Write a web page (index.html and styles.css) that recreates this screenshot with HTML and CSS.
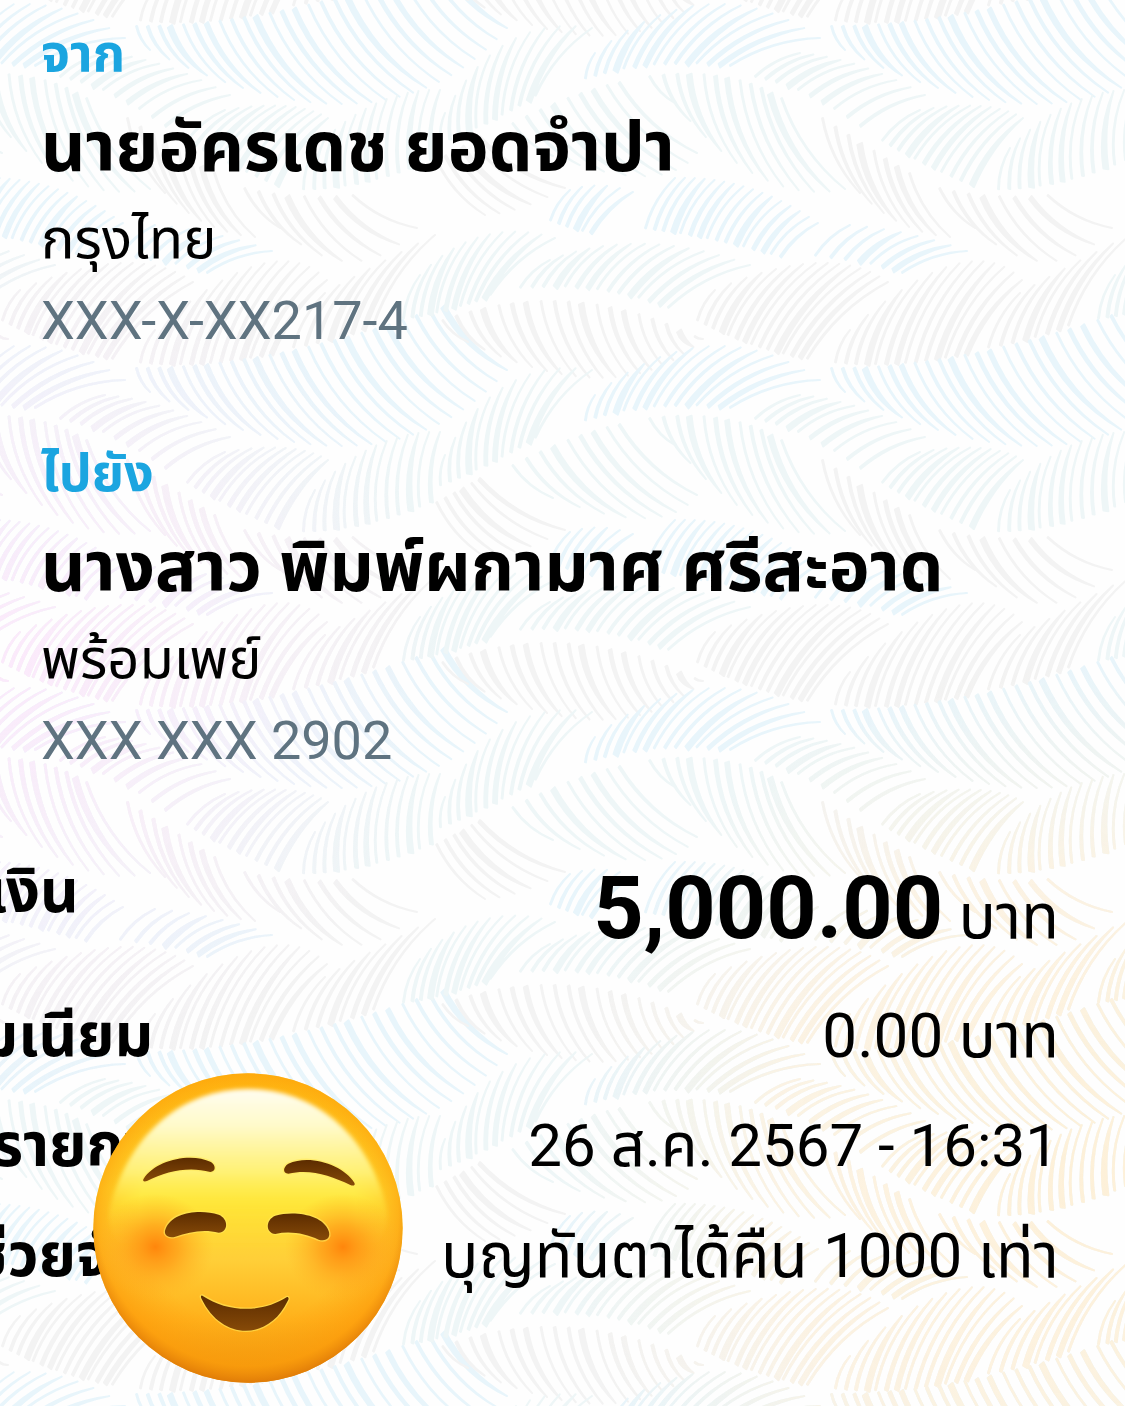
FILE: index.html
```
<!DOCTYPE html>
<html lang="th">
  <head>
    <meta charset="UTF-8" />
    <meta name="viewport" content="width=device-width, initial-scale=1.0" />
    <title>รายละเอียดการโอนเงิน</title>
    <link rel="stylesheet" href="styles.css">
  </head>
  <body>
    <main class="slip">
      <svg class="slip-bg" aria-hidden="true">
        <defs>
          <g id="leaves"></g>
          <pattern id="leafPattern" x="430" y="190" width="695" height="342" patternUnits="userSpaceOnUse">
            <g id="tile"></g>
          </pattern>
          <mask id="leafMask" class="leaf-mask">
            <rect width="100%" height="100%" fill="url(#leafPattern)" />
          </mask>
          <radialGradient id="pinkTint" gradientUnits="userSpaceOnUse" cx="0" cy="660" r="440">
            <stop offset="0" stop-color="#fbe9fb" />
            <stop offset="0.5" stop-color="#f8eef9" stop-opacity="0.8" />
            <stop offset="1" stop-color="#f6f0f8" stop-opacity="0" />
          </radialGradient>
          <radialGradient id="orangeTint" gradientUnits="userSpaceOnUse" cx="1080" cy="1180" r="520">
            <stop offset="0" stop-color="#fdf0d8" />
            <stop offset="0.6" stop-color="#fcf2e1" stop-opacity="0.9" />
            <stop offset="1" stop-color="#f8f4ea" stop-opacity="0" />
          </radialGradient>
        </defs>
        <rect width="100%" height="100%" fill="url(#leafPattern)" />
        <g mask="url(#leafMask)">
          <rect width="100%" height="100%" fill="url(#pinkTint)" />
          <rect width="100%" height="100%" fill="url(#orangeTint)" />
        </g>
      </svg>

      <section class="party">
        <h2>จาก</h2>
        <p class="name">นายอัครเดช ยอดจำปา</p>
        <p class="bank">กรุงไทย</p>
        <p class="account">XXX-X-XX217-4</p>
      </section>

      <section class="party">
        <h2>ไปยัง</h2>
        <p class="name">นางสาว พิมพ์ผกามาศ ศรีสะอาด</p>
        <p class="bank">พร้อมเพย์</p>
        <p class="account">XXX XXX 2902</p>
      </section>

      <dl class="details">
        <div class="row row-amount">
          <dt>จำนวนเงิน</dt>
          <dd><strong>5,000.00</strong> บาท</dd>
        </div>
        <div class="row">
          <dt>ค่าธรรมเนียม</dt>
          <dd>0.00 บาท</dd>
        </div>
        <div class="row row-date">
          <dt>วันที่ทำรายการ</dt>
          <dd>26 ส.ค. 2567 - 16:31</dd>
        </div>
        <div class="row">
          <dt>บันทึกช่วยจำ</dt>
          <dd>บุญทันตาได้คืน 1000 เท่า</dd>
        </div>
      </dl>

      <svg class="emoji" viewBox="38 38 930 930" role="img" aria-label="☺️">
        <defs>
          <linearGradient id="face" x1="0" y1="0" x2="0" y2="1">
            <stop offset="0" stop-color="#ffb90f" />
            <stop offset="0.38" stop-color="#ffe632" />
            <stop offset="0.6" stop-color="#ffcf38" />
            <stop offset="0.8" stop-color="#ffb01a" />
            <stop offset="1" stop-color="#e8920c" />
          </linearGradient>
          <radialGradient id="rim" cx="0.5" cy="0.46" r="0.54">
            <stop offset="0.65" stop-color="#ffa010" stop-opacity="0" />
            <stop offset="0.9" stop-color="#fd9b0a" stop-opacity="0.65" />
            <stop offset="1" stop-color="#e07c08" />
          </radialGradient>
          <linearGradient id="shine" x1="0" y1="0" x2="0" y2="1">
            <stop offset="0" stop-color="#fffdf0" />
            <stop offset="0.18" stop-color="#fffac8" />
            <stop offset="0.4" stop-color="#fff37a" stop-opacity="0.9" />
            <stop offset="0.55" stop-color="#ffea40" stop-opacity="0.4" />
            <stop offset="0.75" stop-color="#ffe038" stop-opacity="0" />
          </linearGradient>
          <radialGradient id="cheek">
            <stop offset="0" stop-color="#ff860c" />
            <stop offset="0.4" stop-color="#ff9412" stop-opacity="0.65" />
            <stop offset="1" stop-color="#ffb020" stop-opacity="0" />
          </radialGradient>
          <linearGradient id="brow" x1="0" y1="0" x2="0" y2="1">
            <stop offset="0" stop-color="#5c2c00" />
            <stop offset="1" stop-color="#864a08" />
          </linearGradient>
          <filter id="soften">
            <feGaussianBlur stdDeviation="7" />
          </filter>
        </defs>
        <circle cx="503" cy="503" r="464" fill="url(#face)" />
        <circle cx="503" cy="503" r="464" fill="url(#rim)" />
        <path d="M503 86C700 86 860 220 915 430C955 590 720 720 503 720C286 720 50 590 92 430C150 220 306 86 503 86Z" fill="url(#shine)" filter="url(#soften)" />
        <ellipse cx="225" cy="560" rx="175" ry="160" fill="url(#cheek)" />
        <ellipse cx="788" cy="560" rx="175" ry="160" fill="url(#cheek)" />
        <g class="emoji-glow">
          <path d="M190 355C225 300 330 275 392 305C408 316 406 334 390 335C330 318 260 330 200 362C190 366 186 361 190 355Z" />
          <path d="M822 367C790 315 690 280 624 310C608 320 606 338 624 340C690 325 750 345 810 374C820 378 826 374 822 367Z" />
          <path d="M256 505C275 455 360 445 415 463C445 475 445 515 415 517C370 505 325 515 285 529C262 535 248 522 256 505Z" />
          <path d="M745 512C728 462 640 450 585 466C555 478 555 518 585 521C630 511 675 520 715 538C738 545 752 532 745 512Z" />
          <path d="M366 706C445 758 545 758 620 710C626 710 626 716 622 722C565 842 425 842 364 716C360 708 362 705 366 706Z" />
        </g>
        <g fill="url(#brow)">
          <path d="M190 355C225 300 330 275 392 305C408 316 406 334 390 335C330 318 260 330 200 362C190 366 186 361 190 355Z" />
          <path d="M822 367C790 315 690 280 624 310C608 320 606 338 624 340C690 325 750 345 810 374C820 378 826 374 822 367Z" />
          <path d="M256 505C275 455 360 445 415 463C445 475 445 515 415 517C370 505 325 515 285 529C262 535 248 522 256 505Z" />
          <path d="M745 512C728 462 640 450 585 466C555 478 555 518 585 521C630 511 675 520 715 538C738 545 752 532 745 512Z" />
          <path d="M366 706C445 758 545 758 620 710C626 710 626 716 622 722C565 842 425 842 364 716C360 708 362 705 366 706Z" />
        </g>
      </svg>
    </main>
    <script src="leaves.js"></script>
  </body>
</html>
```

FILE: styles.css
```
* {
  box-sizing: border-box;
}
body {
  margin: 0;
  background-color: #fefefe;
  color: #000;
  font-family: Roboto, "Noto Sans Thai", sans-serif;
}
h2,
p,
dl,
dd {
  margin: 0;
}
.slip {
  position: relative;
  min-height: 100vh;
  padding: 10px 66px 60px 41px;
  overflow: hidden;
}
.slip-bg {
  position: absolute;
  top: 0;
  left: 0;
  width: 100%;
  height: 100%;
  z-index: -1;
}
.leaf-mask {
  mask-type: alpha;
}
.party {
  margin-bottom: 68px;
}
.party h2 {
  color: #1ba5e0;
  font-size: 52px;
  line-height: 88px;
}
.name {
  font-size: 69px;
  font-weight: 700;
  line-height: 100px;
}
.bank,
.account {
  font-size: 56px;
  line-height: 82px;
}
.account {
  color: #5f7380;
  font-size: 54px;
}
.row {
  display: flex;
  justify-content: space-between;
  line-height: 110px;
  font-size: 62px;
  white-space: nowrap;
}
.row dt {
  margin-left: -222px;
  font-size: 60px;
  font-weight: 700;
}
.row-amount {
  padding-bottom: 6px;
  line-height: 116px;
}
.row-amount dt {
  line-height: 84px;
}
.row-date {
  font-size: 60px;
}
.row strong {
  font-size: 88px;
}
.emoji {
  position: absolute;
  top: 1073px;
  left: 93px;
  width: 310px;
  height: 310px;
}
.emoji-glow {
  fill: none;
  stroke: #ffe95a;
  stroke-width: 8px;
  opacity: 0.6;
}
```

FILE: leaves.js
```
// each leaf: spine curve, curve through the barb tips, number of barbs, colour
const BLUE = "#e8f5fb";
const TEAL = "#eef6f7";
const GREY = "#f3f3f3";

const leaves = [
  [[120, 30, 140, 38, 160, 42], [140, 0, 170, -10, 203, 2], 6, BLUE],
  [[215, 38, 280, 45, 350, 66], [245, -12, 320, -15, 388, 33], 16, BLUE],
  [[-27, 128, 20, 122, 60, 104], [-10, 85, 50, 25, 125, 48], 12, TEAL],
  [[90, 97, 170, 90, 238, 117], [120, 70, 210, 35, 320, 75], 15, TEAL],
  [[13, 130, 140, 85, 265, 146], [38, 152, 190, 225, 273, 149], 19, GREY],
  [[267, 130, 320, 158, 377, 168], [285, 100, 400, 50, 458, 92], 15, GREY],
  [[405, 172, 470, 178, 535, 163], [420, 140, 540, 35, 592, 90], 14, GREY],
  [[558, 157, 600, 150, 638, 135], [590, 103, 640, 75, 700, 45], 8, GREY],
  [[402, 178, 540, 178, 710, 115], [415, 202, 650, 320, 772, 180], 25, BLUE],
  [[7, 312, 30, 300, 50, 288], [55, 367, 90, 365, 135, 340], 6, GREY],
  [[510, -2, 560, 10, 618, 5], [545, 38, 620, 105, 682, 38], 8, GREY],
  [[393, 270, 440, 300, 480, 325], [430, 345, 470, 385, 520, 389], 8, GREY],
  [[83, 275, 140, 245, 190, 234], [123, 308, 235, 350, 267, 305], 9, TEAL],
  [[220, 228, 300, 218, 352, 250], [245, 255, 330, 360, 415, 341], 12, TEAL],
  [[10, 295, 60, 275, 105, 247], [15, 265, 70, 165, 162, 180], 12, TEAL],
  [[155, 230, 220, 208, 300, 217], [165, 205, 280, 115, 390, 190], 15, BLUE],
  [[325, 228, 370, 235, 430, 277], [370, 205, 430, 210, 495, 247], 10, TEAL],
  [[452, 292, 490, 315, 540, 336], [490, 262, 560, 250, 593, 270], 11, TEAL],
  [[568, 341, 630, 340, 695, 312], [580, 300, 640, 240, 705, 242], 13, TEAL],
  [[385, 65, 440, 70, 472, 82], [420, 35, 480, 40, 537, 61], 8, BLUE],
];

const SVG = "http://www.w3.org/2000/svg";

function pointOn(c, t) {
  const a = (1 - t) * (1 - t);
  const b = 2 * t * (1 - t);
  return [
    a * c[0] + b * c[2] + t * t * c[4],
    a * c[1] + b * c[3] + t * t * c[5],
  ];
}

function barb(from, to, width) {
  const dx = to[0] - from[0];
  const dy = to[1] - from[1];
  // barbs above the spine arch upwards, barbs below it sag
  const side = dy < 0 ? 1 : -1;
  const cx = from[0] + dx / 2 + side * dy * 0.14;
  const cy = from[1] + dy / 2 - side * dx * 0.14;
  const len = Math.hypot(dx, dy) || 1;
  const nx = (-dy / len) * width;
  const ny = (dx / len) * width;
  return (
    `M${from[0]} ${from[1]}Q${cx} ${cy} ${to[0]} ${to[1]}` +
    `Q${cx + nx} ${cy + ny} ${from[0] + nx} ${from[1] + ny}Z`
  );
}

const group = document.getElementById("leaves");
leaves.forEach(([spine, tips, count, color]) => {
  let d = "";
  for (let i = 0; i < count; i++) {
    const t = i / (count - 1);
    const width = [1, 2, 2, 5, 1, 3, 4][i % 7];
    d += barb(pointOn(spine, t), pointOn(tips, t), width);
  }
  const path = document.createElementNS(SVG, "path");
  path.setAttribute("d", d);
  path.setAttribute("fill", color);
  path.setAttribute("stroke", color);
  path.setAttribute("stroke-width", 2);
  path.setAttribute("stroke-linejoin", "round");
  group.appendChild(path);
});

// repeat round the tile so that leaves crossing an edge join up
const tile = document.getElementById("tile");
for (const x of [-695, 0, 695]) {
  for (const y of [-342, 0, 342]) {
    const use = document.createElementNS(SVG, "use");
    use.setAttribute("href", "#leaves");
    use.setAttribute("x", x);
    use.setAttribute("y", y);
    tile.appendChild(use);
  }
}
```
